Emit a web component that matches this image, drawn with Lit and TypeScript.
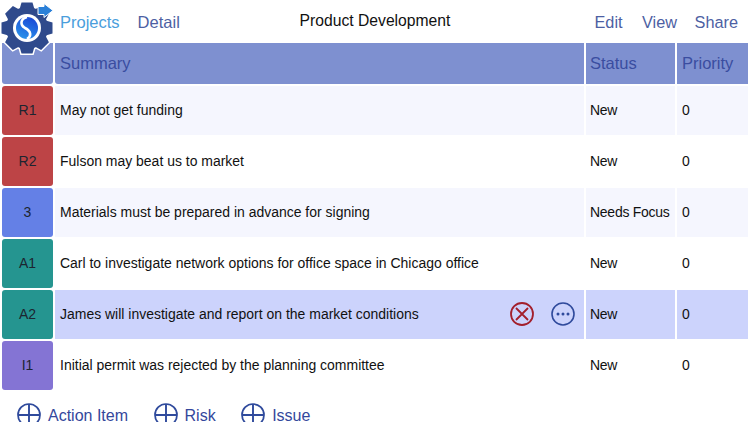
import { LitElement, html, css, svg } from "lit";
import { customElement } from "lit/decorators.js";

const rows = [
  { tag: "R1", cls: "red", text: "May not get funding", status: "New", alt: true },
  { tag: "R2", cls: "red", text: "Fulson may beat us to market", status: "New" },
  { tag: "3", cls: "blue", text: "Materials must be prepared in advance for signing", status: "Needs Focus", alt: true },
  { tag: "A1", cls: "teal", text: "Carl to investigate network options for office space in Chicago office", status: "New" },
  { tag: "A2", cls: "teal", text: "James will investigate and report on the market conditions", status: "New", sel: true },
  { tag: "I1", cls: "purple", text: "Initial permit was rejected by the planning committee", status: "New" },
];

const teeth = Array.from({ length: 8 }, (_, i) => i * 45);

const gear = (fill: string, stroke: string) => svg`<g fill=${fill} stroke=${stroke} stroke-width=${stroke === "none" ? 0 : 3}>
  ${teeth.map((a) => svg`<path d="M21.5 2.5H32.5L35 11H19Z" transform="rotate(${a} 27 28)"></path>`)}
  <circle cx="27" cy="28" r="21"></circle>
</g>`;

const plus = html`<svg class="plus" viewBox="0 0 24 24" width="24" height="24">
  <circle cx="12" cy="12" r="11" fill="none" stroke="#2f4a9c" stroke-width="1.7"></circle>
  <path d="M12 1V23M1 12H23" stroke="#2f4a9c" stroke-width="1.9"></path>
</svg>`;

@customElement("app-root")
export class AppRoot extends LitElement {
  static styles = css`
    :host { display: block; width: 750px; height: 422px; overflow: hidden; background: #fff; position: relative;
      font-family: "Liberation Sans", Arial, sans-serif; color: #111; }
    .logo { position: absolute; left: 0; top: 0; z-index: 2; }
    .nav { height: 43px; display: flex; align-items: center; font-size: 16.5px; color: #4d5fa3; padding: 1px 0 0 60px; box-sizing: border-box; position: relative; }
    .nav .projects { color: #4a9edc; margin-right: 18px; }
    .nav .title { position: absolute; left: 0; right: 0; top: 12px; text-align: center; color: #111; font-size: 15.7px; }
    .nav .right { margin-left: auto; display: flex; gap: 17.5px; padding-right: 12px; position: relative; font-size: 16.3px; }
    .nav .edit { margin-right: 2px; }
    .grid { display: grid; grid-template-columns: 51px 529px 89px 71px; column-gap: 2px; row-gap: 2px; padding-left: 2px; }
    .head { height: 41px; background: #7e90d0; color: #3a4da0; font-size: 16.5px; display: flex; align-items: center; padding-left: 5px; box-sizing: border-box; }
    .head.st { padding-left: 4px; }
    .head.idx { border-radius: 0 0 3px 3px; padding: 0; }
    .head.sum { border-radius: 0 0 0 3px; }
    .cell { height: 49px; display: flex; align-items: center; font-size: 13.97px; padding: 0 0 2px 5px; box-sizing: border-box; background: #fff; }
    .cell.st { letter-spacing: -0.25px; padding-left: 4px; }
    .cell.alt { background: #f5f6fe; }
    .cell.sel { background: #ccd3fc; }
    .tag { height: 49px; border-radius: 3px; display: flex; align-items: center; justify-content: center; font-size: 14px; color: #1c2530; padding-bottom: 2px; box-sizing: border-box; }
    .red { background: #bd4446; }
    .blue { background: #6480e6; }
    .teal { background: #259590; }
    .purple { background: #8474d4; }
    .text { flex: 1; }
    .actions { display: flex; gap: 17px; margin-right: 9px; }
    .actions svg { display: block; }
    .foot { display: flex; align-items: center; padding: 13px 0 0 17px; font-size: 16px; color: #34479c; }
    .foot .item { display: flex; align-items: center; gap: 7px; margin-right: 25.5px; }
    .foot span { margin-top: 2px; }
  `;

  render() {
    return html`
      <svg class="logo" width="56" height="56" viewBox="0 0 56 56">
        <defs>
          <linearGradient id="sw" x1="0.7" y1="0" x2="0.3" y2="1">
            <stop offset="0" stop-color="#1a47d6"></stop>
            <stop offset="1" stop-color="#2a93ea"></stop>
          </linearGradient>
        </defs>
        ${gear("#fff", "#fff")}
        ${gear("#2f4a8c", "none")}
        <circle cx="27" cy="28" r="14" fill="#fff"></circle>
        <circle cx="27" cy="28" r="11" fill="url(#sw)"></circle>
        <path d="M27 17C20 19 20 25 25 28C31 31 32 36 27 39" fill="none" stroke="#fff" stroke-width="2.6"></path>
        <path d="M38 6.5H44V3.5L53 10.5L44 17.5V14.5H38Z" fill="#2a80d8" stroke="#fff" stroke-width="1"></path>
      </svg>
      <div class="nav">
        <span class="projects">Projects</span><span>Detail</span>
        <span class="title">Product Development</span>
        <div class="right"><span class="edit">Edit</span><span>View</span><span>Share</span></div>
      </div>
      <div class="grid">
        <div class="head idx"></div>
        <div class="head sum">Summary</div>
        <div class="head st">Status</div>
        <div class="head">Priority</div>
        ${rows.map((r) => {
          const c = r.sel ? "sel" : r.alt ? "alt" : "";
          return html`
            <div class="tag ${r.cls}">${r.tag}</div>
            <div class="cell ${c}">
              <span class="text">${r.text}</span>
              ${r.sel
                ? html`<div class="actions">
                    <svg width="24" height="24" viewBox="0 0 24 24">
                      <circle cx="12" cy="12" r="11" fill="none" stroke="#a31f2c" stroke-width="1.8"></circle>
                      <path d="M6 6L18 18M18 6L6 18" stroke="#a31f2c" stroke-width="1.8"></path>
                    </svg>
                    <svg width="24" height="24" viewBox="0 0 24 24">
                      <circle cx="12" cy="12" r="11" fill="none" stroke="#2f4a9c" stroke-width="1.6"></circle>
                      <circle cx="7" cy="12" r="1.5" fill="#2f4a9c"></circle>
                      <circle cx="12" cy="12" r="1.5" fill="#2f4a9c"></circle>
                      <circle cx="17" cy="12" r="1.5" fill="#2f4a9c"></circle>
                    </svg>
                  </div>`
                : ""}
            </div>
            <div class="cell st ${c}">${r.status}</div>
            <div class="cell ${c}">0</div>
          `;
        })}
      </div>
      <div class="foot">
        <div class="item">${plus}<span>Action Item</span></div>
        <div class="item">${plus}<span>Risk</span></div>
        <div class="item">${plus}<span>Issue</span></div>
      </div>
    `;
  }
}
